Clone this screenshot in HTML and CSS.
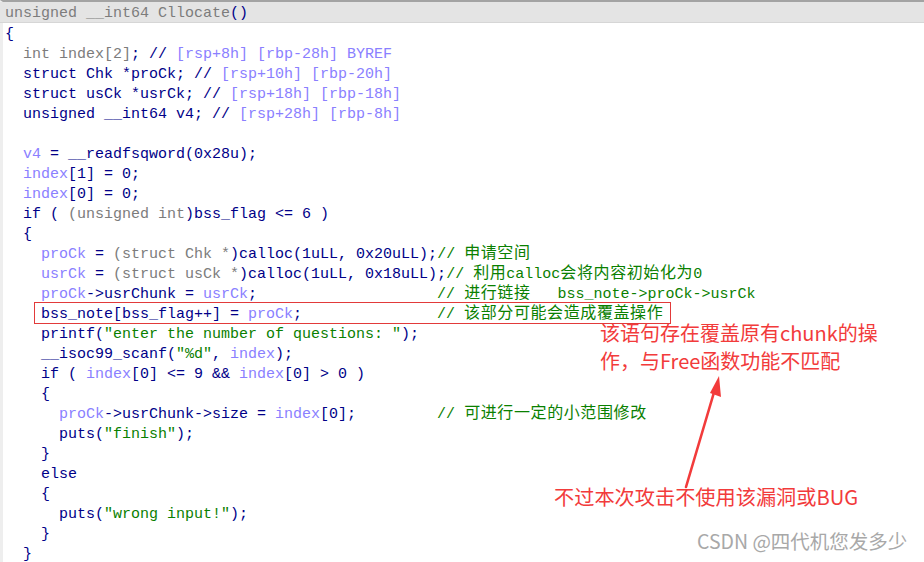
FILE: index.html
```html
<!DOCTYPE html>
<html lang="zh-CN">
<head>
    <meta charset="UTF-8">
    <title>Cllocate</title>
    <link rel="stylesheet" href="styles.css">
</head>
<body>
    <div class="shot">
        <div class="code">
            <div class="line head"><span class="g">unsigned __int64 Cllocate</span>()</div>
            <div class="line">{</div>
            <div class="line">  <span class="g">int index[2]</span>; // <span class="r">[rsp+8h] [rbp-28h] BYREF</span></div>
            <div class="line">  struct Chk *proCk; // <span class="r">[rsp+10h] [rbp-20h]</span></div>
            <div class="line">  struct usCk *usrCk; // <span class="r">[rsp+18h] [rbp-18h]</span></div>
            <div class="line">  unsigned __int64 v4; // <span class="r">[rsp+28h] [rbp-8h]</span></div>
            <div class="line"> </div>
            <div class="line">  <span class="v">v4</span> = __readfsqword(0x28u);</div>
            <div class="line">  <span class="v">index</span>[1] = 0;</div>
            <div class="line">  <span class="v">index</span>[0] = 0;</div>
            <div class="line">  if ( <span class="g">(unsigned int</span>)bss_flag &lt;= 6 )</div>
            <div class="line">  {</div>
            <div class="line">    <span class="v">proCk</span> = <span class="g">(struct Chk *</span>)calloc(1uLL, 0x20uLL);<span class="c">// <span class="z">申请空间</span></span></div>
            <div class="line">    <span class="v">usrCk</span> = <span class="g">(struct usCk *</span>)calloc(1uLL, 0x18uLL);<span class="c">// <span class="z">利用</span>calloc<span class="z">会将内容初始化为</span>0</span></div>
            <div class="line">    <span class="v">proCk</span>-&gt;usrChunk = <span class="v">usrCk</span>;                    <span class="c">// <span class="z">进行链接</span>   bss_note-&gt;proCk-&gt;usrCk</span></div>
            <div class="line marked">    bss_note[bss_flag++] = <span class="v">proCk</span>;               <span class="c">// <span class="z">该部分可能会造成覆盖操作</span></span><span class="frame"></span></div>
            <div class="line">    printf(<span class="s">"enter the number of questions: "</span>);</div>
            <div class="line">    __isoc99_scanf(<span class="s">"%d"</span>, <span class="v">index</span>);</div>
            <div class="line">    if ( <span class="v">index</span>[0] &lt;= 9 &amp;&amp; <span class="v">index</span>[0] &gt; 0 )</div>
            <div class="line">    {</div>
            <div class="line">      <span class="v">proCk</span>-&gt;usrChunk-&gt;size = <span class="v">index</span>[0];         <span class="c">// <span class="z">可进行一定的小范围修改</span></span></div>
            <div class="line">      puts(<span class="s">"finish"</span>);</div>
            <div class="line">    }</div>
            <div class="line">    else</div>
            <div class="line">    {</div>
            <div class="line">      puts(<span class="s">"wrong input!"</span>);</div>
            <div class="line">    }</div>
            <div class="line">  }</div>
        </div>

        <!-- 标注 -->
        <div class="note note-top">该语句存在覆盖原有chunk的操<br>作，与Free函数功能不匹配</div>
        <svg class="arrow" width="60" height="130" viewBox="0 0 60 130">
            <line x1="6" y1="126" x2="35" y2="28" stroke="#f23b3b" stroke-width="2.6" stroke-linecap="round"/>
            <polygon points="39,15 41,36 30,32" fill="#f23b3b"/>
        </svg>
        <div class="note note-bottom">不过本次攻击不使用该漏洞或BUG</div>
        <div class="watermark">CSDN @四代机您发多少</div>
    </div>
</body>
</html>
```

FILE: styles.css
```css
* {
    margin: 0;
    padding: 0;
    box-sizing: border-box;
}

body {
    background: #ffffff;
    width: 924px;
    height: 562px;
    overflow: hidden;
}

.shot {
    position: relative;
    width: 924px;
    height: 562px;
    border-top: 2px solid #a3a3a3;
    border-left: 3px solid #eeeeee;
}

.code {
    font-family: 'Liberation Mono', 'Noto Sans CJK SC', monospace;
    font-size: 15px;
    color: #000088;
}

.line {
    height: 20px;
    line-height: 20px;
    padding-top: 2px;
    padding-left: 2px;
    white-space: pre;
}

.line span {
    line-height: 20px;
}

.head {
    background: #e4e4e4;
    border-bottom: 1px solid #d6d6d6;
    height: 21px;
    margin-left: -3px;
    padding-left: 5px;
}

.g {
    color: #7c7c7c;
}

.v {
    color: #8a80ff;
}

.r {
    color: #8a80ff;
}

.s {
    color: #0a8000;
}

.c {
    color: #0a8000;
}

.line .z {
    font-family: 'Noto Sans CJK SC', sans-serif;
    font-size: 16px;
    line-height: 12px;
    letter-spacing: 0.6px;
}

.marked {
    position: relative;
}

.frame {
    position: absolute;
    left: 31px;
    top: -1px;
    width: 637px;
    height: 22px;
    border: 1px solid #e23a3a;
}

.note {
    position: absolute;
    font-family: 'Noto Sans CJK SC', 'Liberation Sans', sans-serif;
    font-size: 20px;
    line-height: 28px;
    color: #f23b3b;
    white-space: nowrap;
}

.note-top {
    left: 597px;
    top: 317px;
}

.note-bottom {
    left: 551px;
    top: 481px;
    font-size: 20.2px;
}

.arrow {
    position: absolute;
    left: 677px;
    top: 359px;
}

.watermark {
    position: absolute;
    left: 694px;
    top: 524px;
    font-family: 'Noto Sans CJK SC', 'Liberation Sans', sans-serif;
    font-size: 19.5px;
    color: #a8a8a8;
    text-shadow: 0 0 1px #ffffff;
    white-space: nowrap;
}
```
